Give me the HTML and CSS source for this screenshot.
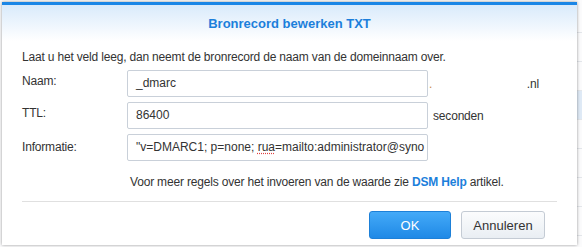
FILE: index.html
```html
<!DOCTYPE html>
<html lang="nl">
<head>
  <meta charset="UTF-8">
  <meta name="viewport" content="width=device-width, initial-scale=1.0">
  <title>Bronrecord bewerken TXT</title>
  <link rel="stylesheet" href="styles.css">
</head>
<body>
  <!-- page behind the dialog -->
  <div class="page">
    <div class="page-row head"></div>
    <div class="page-row"></div>
    <div class="page-row"></div>
    <div class="page-row selected"></div>
    <div class="page-row"></div>
    <div class="page-row"></div>
    <div class="page-row"></div>
    <div class="page-row"></div>
  </div>

  <!-- Dialog -->
  <div class="dialog">
    <div class="dialog-header">Bronrecord bewerken TXT</div>
    <div class="dialog-body">
      <p class="intro">Laat u het veld leeg, dan neemt de bronrecord de naam van de domeinnaam over.</p>

      <div class="form-row">
        <label class="label">Naam:</label>
        <div class="field">_dmarc</div>
        <div class="suffix domain"><span class="dot">.</span><span class="tld">.nl</span></div>
      </div>
      <div class="form-row">
        <label class="label">TTL:</label>
        <div class="field">86400</div>
        <div class="suffix">seconden</div>
      </div>
      <div class="form-row centered">
        <label class="label">Informatie:</label>
        <div class="field">"v=DMARC1; p=none; <span class="typo">rua</span>=mailto:administrator@syno</div>
      </div>

      <p class="help">Voor meer regels over het invoeren van de waarde zie <a href="#">DSM Help</a> artikel.</p>
    </div>
    <div class="dialog-footer">
      <button class="btn btn-primary">OK</button>
      <button class="btn">Annuleren</button>
    </div>
  </div>
</body>
</html>
```

FILE: styles.css
```css
body {
  margin: 0;
  height: 247px;
  overflow: hidden;
  background-color: #fbfbfc;
  font-family: "Liberation Sans", Arial, sans-serif;
  font-size: 12px;
  letter-spacing: -0.18px;
  color: #333;
  position: relative;
}

.page {
  display: flex;
  flex-direction: column;
  padding-left: 30px;
}

.page-row {
  height: 28px;
  border-bottom: 1px solid #e3e6ea;
}

.page-row.head {
  height: 32px;
}

.page-row.selected {
  background-color: #dfeaf6;
}

/* Dialog */

.dialog {
  position: absolute;
  top: 2px;
  left: 2px;
  width: 575px;
  height: 240px;
  background-color: #fff;
  border-top: 3px solid #1b86e6;
  box-shadow: 0 0 3px rgba(0, 0, 0, 0.4);
  display: flex;
  flex-direction: column;
}

.dialog-header {
  height: 36px;
  line-height: 37px;
  text-align: center;
  font-weight: bold;
  font-size: 13px;
  letter-spacing: 0;
  color: #1c7fdb;
  background: linear-gradient(to bottom, #d9eafb, #ffffff);
}

.dialog-body {
  padding: 0 20px;
}

.intro {
  margin: 8px 0 5px;
  line-height: 16px;
}

.form-row {
  display: flex;
  align-items: flex-start;
  height: 27px;
  margin-bottom: 5px;
}

.form-row.centered {
  align-items: center;
}

.label {
  width: 105px;
  line-height: 22px;
}

.form-row.centered .label {
  line-height: 27px;
}

.field {
  width: 291px;
  height: 25px;
  line-height: 25px;
  padding-left: 8px;
  border: 1px solid #c9d0d9;
  border-radius: 2px;
  white-space: nowrap;
  overflow: hidden;
  letter-spacing: 0;
  color: #333;
}

.typo {
  text-decoration: underline dotted #e04040;
  text-underline-offset: 2px;
}

.suffix {
  align-self: center;
  margin-left: 5px;
}

.suffix.domain {
  display: flex;
  width: 110px;
  margin-left: 1px;
}

.dot {
  color: #c98a4a;
  width: 99px;
}

.help {
  margin: 13px 0 0 108px;
  line-height: 16px;
}

.help a {
  color: #1c7fdb;
  font-weight: bold;
  text-decoration: none;
}

.dialog-footer {
  margin: 11px 20px 0;
  border-top: 1px solid #e0e0e0;
  padding: 9px 12px 0 0;
  display: flex;
  justify-content: flex-end;
  gap: 10px;
}

.btn {
  height: 28px;
  width: 84px;
  padding: 0;
  font-family: "Liberation Sans", Arial, sans-serif;
  font-size: 13px;
  color: #333;
  border: 1px solid #c4cbd4;
  border-radius: 3px;
  background: linear-gradient(to bottom, #fbfcfd, #e9eef3);
  cursor: pointer;
}

.btn-primary {
  width: 82px;
  color: #fff;
  border-color: #1d80d8;
  background: linear-gradient(to bottom, #44aaf8, #1f89e6);
}
```
